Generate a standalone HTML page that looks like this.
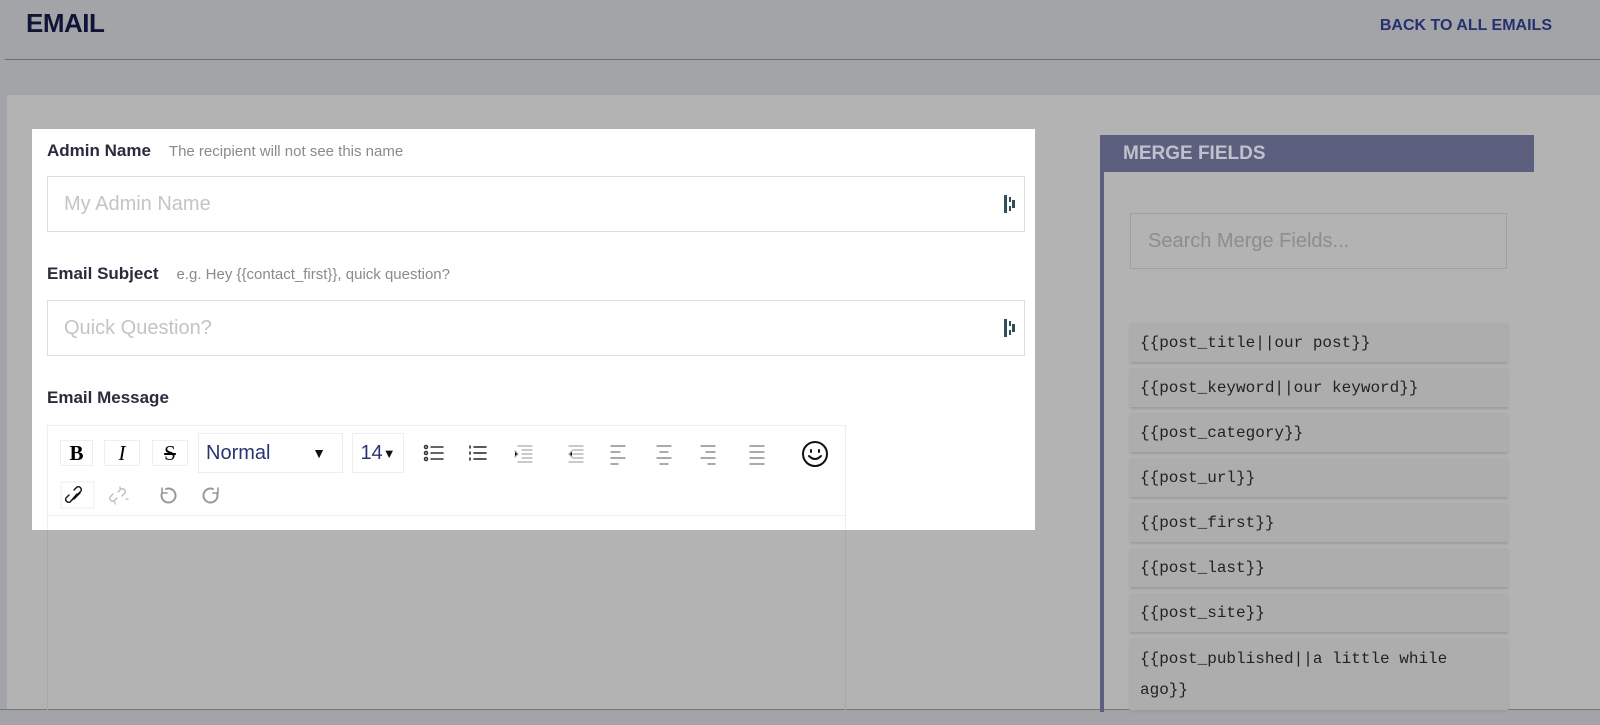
<!DOCTYPE html>
<html><head><style>
*{box-sizing:border-box;margin:0;padding:0}
body{width:1600px;height:725px;overflow:hidden;background:#a3a4a8;font-family:"Liberation Sans",sans-serif;position:relative}
.abs{position:absolute}
.lbl{font-weight:bold;font-size:17px;color:#2a2c3e}
.hint{font-size:15px;color:#8a8a8a;margin-left:18px;font-weight:normal}
.inp{border:1px solid #ddd;background:#fff;font-size:20px;color:#c4c4c4;padding-left:16px;display:flex;align-items:center}
.btn{position:absolute;top:440px;height:26px;border:1px solid #eee;background:#fff;display:flex;align-items:center;justify-content:center}
.mf{position:absolute;left:1130px;width:378px;background:#adadad;box-shadow:0 2px 2px #9c9c9c;font-family:"Liberation Mono",monospace;font-size:16px;color:#222;padding:0 30px 0 10px;display:flex;align-items:center}
</style></head><body>
<div class="abs" style="left:26px;top:8px;font-size:26px;font-weight:bold;color:#101538;letter-spacing:-0.5px">EMAIL</div>
<div class="abs" style="right:48px;top:17px;font-size:16px;font-weight:bold;color:#26306e">BACK TO ALL EMAILS</div>
<div class="abs" style="left:5px;top:59px;width:1595px;height:1px;background:#6b6c72"></div>
<div class="abs" style="left:7px;top:95px;width:1593px;height:630px;background:#b3b3b3"></div>
<div class="abs" style="left:0;top:709px;width:1600px;height:16px;background:#a3a4a8;border-top:1px solid #777"></div>
<div class="abs" style="left:47px;top:530px;width:799px;height:180px;border-left:1px solid #a8a8a8;border-right:1px solid #a8a8a8"></div>
<div class="abs" style="left:32px;top:129px;width:1003px;height:401px;background:#fff;overflow:hidden">
 <div class="abs lbl" style="left:15px;top:12px">Admin Name<span class="hint">The recipient will not see this name</span></div>
 <div class="abs inp" style="left:15px;top:47px;width:978px;height:56px">My Admin Name</div>
 <div class="abs lbl" style="left:15px;top:135px">Email Subject<span class="hint">e.g. Hey {{contact_first}}, quick question?</span></div>
 <div class="abs inp" style="left:15px;top:171px;width:978px;height:56px">Quick Question?</div>
 <div class="abs lbl" style="left:15px;top:259px">Email Message</div>
 <div class="abs" style="left:15px;top:296px;width:799px;height:120px;border:1px solid #eee"></div>
 <div class="abs" style="left:15px;top:386px;width:799px;height:1px;background:#eee"></div>
 <svg class="abs" style="left:970px;top:65px" width="16" height="20"><rect x="2" y="1" width="3" height="18" fill="#2f4f5a"/><rect x="7" y="3" width="2" height="5" fill="#2f4f5a"/><rect x="7" y="12" width="2" height="5" fill="#2f4f5a"/><rect x="10" y="6" width="3" height="8" fill="#2f4f5a"/></svg>
 <svg class="abs" style="left:970px;top:189px" width="16" height="20"><rect x="2" y="1" width="3" height="18" fill="#2f4f5a"/><rect x="7" y="3" width="2" height="5" fill="#2f4f5a"/><rect x="7" y="12" width="2" height="5" fill="#2f4f5a"/><rect x="10" y="6" width="3" height="8" fill="#2f4f5a"/></svg>
</div>
<div class="btn" style="left:60px;width:33px;font-weight:bold;font-size:21px;font-family:'Liberation Serif',serif">B</div>
<div class="btn" style="left:104px;width:36px;font-style:italic;font-size:21px;font-family:'Liberation Serif',serif">I</div>
<div class="btn" style="left:152px;width:36px;font-size:21px;text-decoration:line-through;font-family:'Liberation Serif',serif">S</div>
<div class="btn" style="left:198px;width:145px;height:40px;top:433px;justify-content:space-between;padding:0 16px 0 7px;font-size:20px;color:#2a3570">Normal<span style="font-size:14px;color:#111">▼</span></div>
<div class="btn" style="left:352px;width:52px;height:40px;top:433px;font-size:20px;color:#2a3570">14<span style="font-size:13px;color:#111">▼</span></div>
<svg class="abs" style="left:414px;top:440px" width="470" height="28" stroke-linecap="round">
 <g stroke="#333" stroke-width="1.5"><circle cx="12" cy="7" r="1.5" fill="none"/><circle cx="12" cy="13" r="1.5" fill="none"/><circle cx="12" cy="19" r="1.5" fill="none"/><path d="M17 7h12M17 13h12M17 19h12"/></g>
 <g stroke="#222" stroke-width="1.5"><path d="M56 6v2M56 12v2M56 18v2M60 7h12M60 13h12M60 19h12"/></g>
 <g stroke="#aaa" stroke-width="1.3"><path d="M104 6h14M108 10h10M108 14h10M108 18h10M104 22h14M101 11l3 3-3 3"/></g>
 <g stroke="#aaa" stroke-width="1.3"><path d="M155 6h14M159 10h10M159 14h10M159 18h10M155 22h14M158 11l-3 3 3 3"/></g>
 <g stroke="#777" stroke-width="1.3"><path d="M197 6h14M197 12h9M197 18h14M197 24h7"/></g>
 <g stroke="#777" stroke-width="1.3"><path d="M243 6h14M246 12h8M243 18h14M246 24h8"/></g>
 <g stroke="#777" stroke-width="1.3"><path d="M287 6h14M292 12h9M287 18h14M294 24h7"/></g>
 <g stroke="#777" stroke-width="1.3"><path d="M336 6h14M336 12h14M336 18h14M336 24h14"/></g>
 <g stroke="#111" stroke-width="2" fill="none"><circle cx="401" cy="14" r="12"/><path d="M395 16q6 6 12 0"/><path d="M397 10v2M405 10v2"/></g>
</svg>
<svg class="abs" style="left:60px;top:481px" width="180" height="28" fill="none" stroke-linecap="round">
 <rect x="1" y="1" width="33" height="26" stroke="#eee"/>
 <g stroke="#111" stroke-width="1.4"><path d="M11 20l6-7M14 9l3-3a3 3 0 014 4l-3 3M13 18l-3 3a3 3 0 01-4-4l3-3"/><path d="M20 12l-6 6"/></g>
 <g stroke="#bbb" stroke-width="1.3"><path d="M58 11l3-3a3 3 0 014 4l-3 3M57 17l-3 3a3 3 0 01-4-4l3-3M60 8v-2M66 18h2M55 21v2"/></g>
 <g stroke="#999" stroke-width="2"><path d="M106 8a7 7 0 11-4 4"/><path d="M102 7v5h5" stroke-width="1.6"/></g>
 <g stroke="#999" stroke-width="2"><path d="M153 8a7 7 0 104 4"/><path d="M158 7v5h-5" stroke-width="1.6"/></g>
</svg>
<div class="abs" style="left:1100px;top:135px;width:434px;height:37px;background:#5c607e;color:#bfc1cc;font-weight:bold;font-size:19px;padding:8px 0 0 23px">MERGE FIELDS</div>
<div class="abs" style="left:1100px;top:172px;width:4px;height:540px;background:#5c607e"></div>
<div class="abs" style="left:1130px;top:213px;width:377px;height:56px;border:1px solid #a0a0a0;font-size:20px;color:#8d8d8d;padding:16px 0 0 17px">Search Merge Fields...</div>
<div class="mf" style="top:323px;height:39px">{{post_title||our post}}</div>
<div class="mf" style="top:368px;height:39px">{{post_keyword||our keyword}}</div>
<div class="mf" style="top:413px;height:39px">{{post_category}}</div>
<div class="mf" style="top:458px;height:39px">{{post_url}}</div>
<div class="mf" style="top:503px;height:39px">{{post_first}}</div>
<div class="mf" style="top:548px;height:39px">{{post_last}}</div>
<div class="mf" style="top:593px;height:39px">{{post_site}}</div>
<div class="mf" style="top:638px;height:72px;line-height:31px;align-items:flex-start;padding-top:6px">{{post_published||a little while ago}}</div>
</body></html>
